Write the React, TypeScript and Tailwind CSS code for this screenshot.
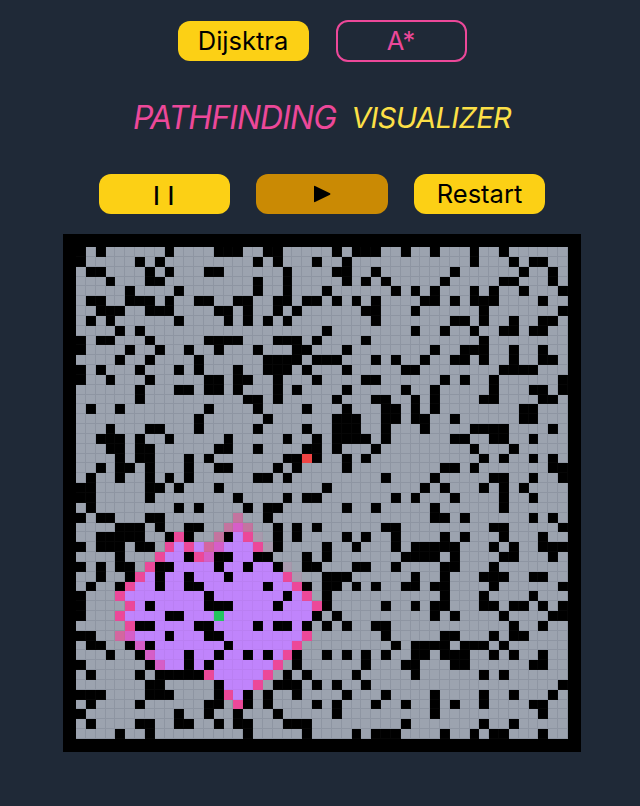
const WALLS: number[][] = [
  [0, 2, 9, 14, 15, 16, 19, 20, 26, 28, 29, 30, 33, 36, 40, 43],
  [0, 6, 8, 18, 20, 24, 27, 40, 44, 46, 47],
  [1, 2, 7, 9, 13, 14, 21, 26, 27, 30, 38, 45, 48],
  [3, 7, 8, 18, 21, 27, 29, 31, 37, 43, 44, 48],
  [5, 10, 18, 21, 25, 32, 34, 36, 40, 42, 45, 49],
  [1, 2, 5, 6, 7, 9, 12, 13, 16, 17, 20, 21, 23, 24, 26, 28, 30, 35, 36, 38, 40, 41, 42, 47],
  [2, 3, 4, 7, 8, 9, 14, 15, 17, 20, 22, 29, 30, 34, 41, 49],
  [1, 3, 10, 15, 17, 19, 21, 30, 38, 39, 41, 44, 47, 48],
  [4, 6, 25, 34, 37, 40, 43, 44, 46, 47],
  [0, 2, 3, 7, 13, 14, 15, 16, 20, 21, 22, 24, 29, 41],
  [0, 5, 8, 11, 14, 18, 22, 23, 27, 36, 39, 40, 41, 44, 47],
  [4, 7, 12, 19, 20, 21, 22, 24, 25, 26, 30, 32, 35, 38, 39, 41, 44, 47, 48],
  [0, 2, 6, 10, 12, 16, 19, 20, 21, 23, 27, 33, 34, 43, 44, 45, 46],
  [0, 3, 7, 13, 14, 16, 17, 20, 24, 29, 30, 37, 39, 42, 49],
  [6, 10, 11, 13, 14, 16, 20, 22, 27, 33, 36, 42, 46, 47, 49],
  [6, 17, 18, 20, 26, 30, 31, 34, 36, 41, 42, 47, 48],
  [1, 4, 13, 18, 23, 27, 31, 32, 34, 36, 45, 46],
  [12, 19, 26, 27, 28, 31, 32, 34, 35, 38, 45, 46],
  [3, 7, 8, 12, 18, 23, 26, 27, 28, 31, 35, 40, 41, 42, 43, 48],
  [2, 3, 4, 6, 9, 15, 21, 24, 26, 27, 28, 29, 31, 38, 39, 42, 43, 46],
  [3, 4, 6, 7, 14, 15, 18, 23, 24, 26, 30, 40, 44],
  [4, 6, 7, 11, 13, 21, 22, 24, 27, 29, 41, 43, 46, 48],
  [2, 4, 5, 7, 11, 14, 15, 20, 22, 27, 37, 38, 40, 48, 49],
  [1, 4, 7, 9, 11, 18, 19, 21, 31, 36, 42, 43, 46, 49],
  [0, 1, 7, 8, 10, 14, 25, 35, 37, 41, 43, 45],
  [0, 1, 7, 16, 21, 23, 24, 32, 34, 38, 43, 46],
  [1, 10, 12, 17, 19, 20, 27, 30, 36, 43],
  [0, 2, 3, 7, 8, 19, 36, 37, 39, 46, 48],
  [4, 5, 6, 8, 11, 12, 20, 22, 24, 31, 32, 42, 43, 49],
  [2, 3, 4, 5, 6, 9, 11, 15, 20, 22, 27, 29, 32, 37, 39, 43, 47],
  [0, 2, 3, 4, 6, 7, 20, 25, 28, 32, 34, 35, 36, 37, 38, 42, 44, 47, 48, 49],
  [4, 11, 14, 15, 18, 19, 23, 25, 33, 34, 35, 36, 38, 43, 44, 48],
  [0, 2, 4, 5, 8, 9, 14, 17, 20, 23, 24, 28, 29, 32, 37, 38, 42],
  [2, 5, 8, 11, 15, 25, 26, 27, 34, 37, 41, 42, 43, 46, 47],
  [1, 4, 8, 11, 12, 19, 23, 25, 26, 28, 30, 33, 34, 36, 37, 42, 49],
  [0, 13, 21, 25, 37, 41, 46],
  [0, 7, 13, 14, 15, 20, 25, 31, 34, 36, 37, 41, 42, 44, 45, 47, 49],
  [0, 9, 10, 24, 26, 36, 38, 43, 48, 49],
  [6, 7, 12, 13, 18, 20, 21, 23, 25, 27, 30, 31, 44, 47],
  [0, 1, 9, 13, 14, 31, 37, 38, 42, 44, 45],
  [1, 2, 5, 7, 15, 32, 34, 35, 36, 37, 39, 40, 41, 43],
  [3, 6, 11, 14, 17, 19, 22, 25, 27, 29, 31, 34, 35, 37, 38, 39, 42, 44, 47],
  [0, 7, 11, 13, 22, 29, 33, 34, 38, 39, 46, 47],
  [1, 6, 8, 9, 10, 11, 12, 21, 23, 28, 34, 41, 43],
  [7, 8, 14, 20, 21, 22, 24, 26, 29, 49],
  [0, 1, 2, 7, 8, 9, 14, 17, 19, 22, 27, 31, 36, 41, 44, 48],
  [1, 6, 13, 14, 17, 19, 24, 26, 30, 33, 36, 38, 41, 46, 47],
  [0, 10, 13, 16, 20, 26, 36, 47],
  [1, 6, 7, 10, 11, 14, 16, 17, 21, 22, 23, 33, 41, 44],
  [4, 7, 17, 23, 28, 30, 31, 32, 37, 40, 42, 43, 47],
]

// visited span per row, walls are painted on top
const VISITED: Record<number, [number, number]> = {
  29: [16, 16],
  30: [10, 17],
  31: [9, 17],
  32: [10, 19],
  33: [7, 20],
  34: [6, 21],
  35: [5, 22],
  36: [6, 23],
  37: [5, 23],
  38: [6, 22],
  39: [6, 22],
  40: [7, 21],
  41: [8, 20],
  42: [9, 19],
  43: [14, 18],
  44: [15, 17],
  45: [16, 16],
}

// wave front, from freshest to settled: g, f, h, p, m
const FRONT: Record<string, string> = {
  "27:16": "f",
  "28:15": "f",
  "28:16": "m",
  "28:17": "f",
  "29:10": "p",
  "29:14": "f",
  "29:17": "p",
  "29:18": "g",
  "30:9": "p",
  "30:11": "p",
  "30:13": "h",
  "30:14": "m",
  "30:18": "p",
  "30:19": "g",
  "31:8": "p",
  "31:12": "p",
  "31:13": "m",
  "32:7": "p",
  "32:21": "g",
  "33:6": "p",
  "33:21": "p",
  "33:22": "g",
  "34:5": "p",
  "34:22": "p",
  "35:4": "p",
  "35:23": "p",
  "36:5": "p",
  "36:24": "p",
  "37:4": "p",
  "38:5": "p",
  "39:4": "h",
  "39:5": "m",
  "39:23": "p",
  "40:6": "m",
  "40:22": "p",
  "41:7": "m",
  "41:21": "p",
  "42:8": "m",
  "42:20": "p",
  "43:13": "p",
  "43:19": "p",
  "44:18": "p",
  "45:15": "p",
  "46:16": "p",
}

const cellClass = (r: number, c: number) => {
  if (r === 21 && c === 23) return "bg-[#ef4444] border-[#ef4444]"
  if (r === 37 && c === 14) return "bg-[#22c55e] border-[#22c55e]"
  if (WALLS[r].includes(c)) return "bg-black border-[#060606]"
  const front = FRONT[`${r}:${c}`]
  if (front === "p") return "bg-[#ec4899] border-[#e64a96]"
  if (front === "m") return "bg-[#d65ec8] border-[#d05cc2]"
  if (front === "h") return "bg-[#d4669f] border-[#cc659b]"
  if (front === "f") return "bg-[#c4749f] border-[#bc719b]"
  if (front === "g") return "bg-[#a99aae] border-[#a295a8]"
  const span = VISITED[r]
  if (span && c >= span[0] && c <= span[1]) return "bg-[#c084fc] border-[#ba7ff3]"
  return "bg-[#9ca3af] border-[#8e95a2]"
}

const Grid = () => {
  return (
    <div className="mt-[20px] bg-black p-[13px]">
      <div className="grid h-[492px] w-[492px] grid-cols-[repeat(50,1fr)] grid-rows-[repeat(50,1fr)]">
        {WALLS.map((_, r) =>
          Array.from({ length: 50 }, (_, c) => (
            <div key={`${r}-${c}`} className={`border-r border-b ${cellClass(r, c)}`} />
          )),
        )}
      </div>
    </div>
  )
}

const yellowBtn =
  "flex h-10 w-[131px] items-center justify-center rounded-xl bg-[#fcd015] text-[25.5px] text-black"

const rowBtn =
  "flex h-10 w-[131.5px] items-center justify-center rounded-xl bg-[#fcd015] text-[25.5px] text-black"

export default function App() {
  return (
    <div className="flex min-h-[806px] flex-col items-center bg-[#1f2937] pt-5 pl-1 font-['Inter',sans-serif]">
      <div className="flex items-center gap-[27px]">
        <button className={yellowBtn}>Dijsktra</button>
        <button className="flex h-[42px] w-[131px] items-center justify-center rounded-xl border-2 border-[#ec4899] text-[25.5px] text-[#ec4899]">
          A*
        </button>
      </div>
      <h1 className="mt-[36px] flex h-[40px] items-center gap-[15px] font-normal italic">
        <span className="text-[32px] tracking-[-0.9px] text-[#ec4899]">PATHFINDING</span>
        <span className="text-[29px] tracking-[-0.6px] text-[#fde047]">VISUALIZER</span>
      </h1>
      <div className="mt-[36px] flex items-center gap-[26px]">
        <button className="flex h-10 w-[131.5px] items-center justify-center rounded-xl bg-[#fcd015] font-['Liberation_Sans',sans-serif] text-[21px] font-bold tracking-[1.4px] text-black">
          | |
        </button>
        <button className="flex h-10 w-[131.5px] items-center justify-center rounded-xl bg-[#ca8a04] text-black">
          <svg width="18" height="18" viewBox="0 0 18 18">
            <path d="M1 1.5 Q1 0.5 2 1 L17 8.2 Q18 9 17 9.8 L2 17 Q1 17.5 1 16.5 Z" fill="currentColor" />
          </svg>
        </button>
        <button className={rowBtn}>Restart</button>
      </div>
      <Grid />
    </div>
  )
}
